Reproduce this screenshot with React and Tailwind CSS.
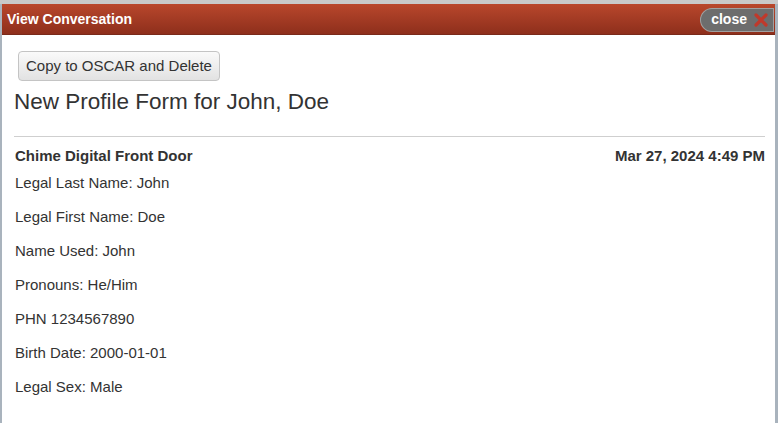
export default function App() {
  const fields = [
    "Legal Last Name: John",
    "Legal First Name: Doe",
    "Name Used: John",
    "Pronouns: He/Him",
    "PHN 1234567890",
    "Birth Date: 2000-01-01",
    "Legal Sex: Male",
  ];

  return (
    <div className="w-[778px] h-[423px] overflow-hidden bg-[#c9c9c9] pt-[4px] font-['Liberation_Sans',Arial,sans-serif]">
      <div className="h-full flex flex-col border-l-2 border-r-[3px] border-[#a9b3bd] bg-white">
        {/* Title bar */}
        <div className="h-[31px] flex items-center justify-between pl-[5px] pr-[1px] pt-[1px] bg-gradient-to-b from-[#b9472c] to-[#8e2f1c] border-b border-[#7a2a1a]">
          <span className="text-white font-bold text-[14px]">View Conversation</span>
          <button className="h-[24px] flex items-center gap-[6px] pl-[10px] pr-[4px] rounded-l-full rounded-r-[3px] bg-[#6d6d6d] border border-[#a0a0a0] text-white font-bold text-[14px]">
            close
            <svg width="16" height="16" viewBox="0 0 16 16">
              <path d="M3 3L13 13M13 3L3 13" stroke="#c0392b" strokeWidth="3.2" strokeLinecap="round" />
            </svg>
          </button>
        </div>

        {/* Body */}
        <div className="flex flex-col pl-[12px] pr-[10px]">
          <div className="pt-[16px] pl-[4px]">
            <button className="h-[30px] px-[7px] rounded-[4px] border border-[#c4c4c4] bg-gradient-to-b from-[#fafafa] to-[#e2e2e2] text-[#333] text-[15px]">
              Copy to OSCAR and Delete
            </button>
          </div>
          <h1 className="mt-[6px] text-[22.5px] leading-[30px] text-[#333]">
            New Profile Form for John, Doe
          </h1>
          <div className="mt-[19px] border-t border-[#cfcfcf]" />
          <div className="flex justify-between pt-[9px] font-bold text-[15px] text-[#333] leading-[19px]">
            <span className="pl-[1px]">Chime Digital Front Door</span>
            <span>Mar 27, 2024 4:49 PM</span>
          </div>
          <div className="flex flex-col gap-[15px] pt-[8px] pl-[1px] text-[15px] leading-[19px] text-[#333]">
            {fields.map((f) => (
              <p key={f}>{f}</p>
            ))}
          </div>
        </div>
      </div>
    </div>
  );
}
